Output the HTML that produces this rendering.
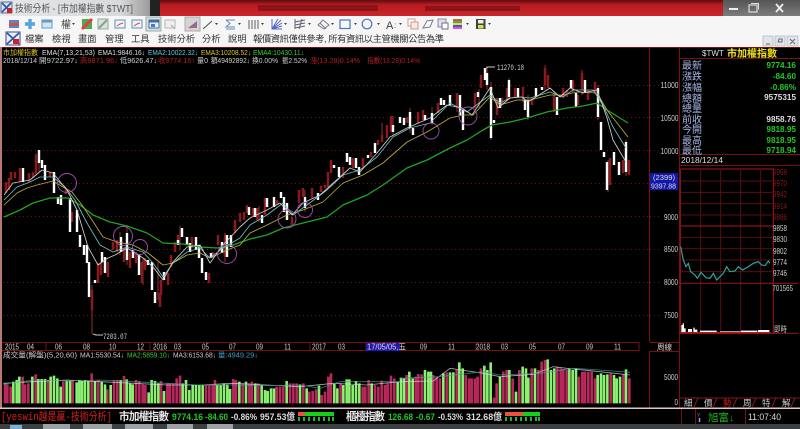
<!DOCTYPE html>
<html><head><meta charset="utf-8"><style>
html,body{margin:0;padding:0;background:#000;width:800px;height:429px;overflow:hidden}
svg{display:block;filter:blur(.35px)}
text{font-family:"Liberation Sans","Noto Sans CJK TC",sans-serif}
.m{font-family:"Liberation Mono","Noto Sans CJK TC",monospace}
</style></head><body>
<svg width="800" height="429" viewBox="0 0 800 429" xmlns="http://www.w3.org/2000/svg">
<defs><linearGradient id="tb" x1="0" y1="0" x2="0" y2="1"><stop offset="0" stop-color="#5c0c0e"/><stop offset=".3" stop-color="#b81c22"/><stop offset="1" stop-color="#c8262c"/></linearGradient>
<linearGradient id="tl" x1="0" y1="0" x2="1" y2="0"><stop offset="0" stop-color="#e4e8ea"/><stop offset=".8" stop-color="#d8dadc"/><stop offset="1" stop-color="#9a9a9a"/></linearGradient>
<linearGradient id="tw" x1="0" y1="0" x2="0" y2="1"><stop offset="0" stop-color="#555"/><stop offset="1" stop-color="#7c7c7c"/></linearGradient></defs>
<rect width="800" height="429" fill="#000"/>
<!-- title bar -->
<rect x="0" y="0" width="150" height="16" fill="url(#tl)"/>
<rect x="150" y="0" width="10" height="16" fill="#222"/>
<rect x="160" y="0" width="563" height="16" fill="url(#tb)"/>
<rect x="723" y="0" width="77" height="16" fill="url(#tw)"/>
<rect x="1" y="2" width="11" height="11" fill="#dde" stroke="#225" stroke-width=".6"/>
<path d="M2 3l9 9M11 3l-9 9" stroke="#1c5fb0" stroke-width="1.6"/>
<rect x="7" y="8" width="5" height="5" fill="#c22"/>
<text x="15" y="12" font-size="10.2" fill="#555" textLength="118" lengthAdjust="spacingAndGlyphs">技術分析 - [市加權指數 $TWT]</text>
<g fill="#7a1013" opacity=".7"><rect x="258" y="5" width="120" height="6"/><rect x="425" y="6" width="95" height="5"/></g>
<path d="M729 9h9" stroke="#eee" stroke-width="2"/>
<rect x="749" y="5" width="8" height="7" fill="none" stroke="#ddd" stroke-width="1.2"/><path d="M751 3.500h7.500v6" fill="none" stroke="#ddd"/>
<path d="M776 4l7 8M783 4l-7 8" stroke="#eee" stroke-width="1.8"/>
<!-- toolbar -->
<rect x="0" y="16" width="800" height="31" fill="#f6f6f6"/>
<rect x="146" y="17" width="15" height="14" fill="#d8e0e6" stroke="#9aa" />
<rect x="185" y="17" width="15" height="14" fill="#d4d4d4" stroke="#aaa"/>
<g opacity=".85">
<rect x="9" y="20" width="10" height="3" fill="#3a78b8"/><rect x="9" y="23" width="10" height="3" fill="#c33"/><rect x="9" y="26" width="10" height="2" fill="#3a78b8"/>
<path d="M30 19v10M25 24h10" stroke="#3c96d8" stroke-width="3.400"/>
<rect x="42" y="20" width="10" height="8" fill="#cfe3f2" stroke="#4a8cc0"/><rect x="42" y="20" width="10" height="2.500" fill="#4a8cc0"/>
<text x="61" y="28" font-size="10" fill="#222">權</text><path d="M72 23h3l-1.500 2z" fill="#222"/>
<rect x="82" y="19" width="10" height="10" fill="#30a030"/><path d="M82 29l10-10" stroke="#d22" stroke-width="3"/>
<rect x="98" y="19" width="10" height="10" fill="#d8e0d8" stroke="#8a9a8a"/><path d="M99 28l8-8" stroke="#6a9a7a" stroke-width="2"/>
<rect x="115" y="20" width="10" height="8" fill="#eef4fa" stroke="#4a80b0"/><path d="M117 26l3-2 3-1" stroke="#c33"/>
<rect x="132" y="20" width="10" height="8" fill="#eef4fa" stroke="#4a80b0"/><path d="M134 26l3-2 3-1" stroke="#c33"/>
<rect x="149" y="20" width="10" height="8" fill="#eef" stroke="#2a5a90"/><rect x="149" y="20" width="10" height="2.500" fill="#2a5a90"/><rect x="151" y="24" width="4" height="3" fill="#36c"/>
<rect x="165" y="20" width="10" height="8" fill="#eee" stroke="#aaa"/><path d="M171 25l4 4" stroke="#999"/>
<path d="M188 28l9-7v7z" fill="#7060b0"/><path d="M190 28l6-4" stroke="#c44" stroke-width="1.500"/>
<path d="M203 29l9-8" stroke="#333"/><path d="M215 23h3l-1.500 2z" fill="#222"/>
<path d="M226 20h9M226 20l4 3.500-4 3.500h9M226 29h9" fill="none" stroke="#4a78b0"/><path d="M238 23h3l-1.500 2z" fill="#222"/>
<path d="M249 20v9M252 20v9M255 20v9M258 20v9" stroke="#444"/><path d="M261 23h3l-1.500 2z" fill="#222"/>
<path d="M272 19v10h10M272 29l9-9M272 29l10-6M272 29l10-3M272 29l6-10" stroke="#3a50b8" fill="none"/><path d="M284 23h3l-1.500 2z" fill="#222"/>
<path d="M295 19v10M295 22l10-2M295 25l10-2M295 28l10-2M302 19l-3 10" stroke="#445" fill="none"/><path d="M308 23h3l-1.500 2z" fill="#222"/>
<path d="M318 25l5-5 6 5-5 4zM320 23l6 6" fill="none" stroke="#667"/><path d="M331 23h3l-1.500 2z" fill="#222"/>
<rect x="340" y="20" width="10" height="8.500" fill="none" stroke="#3060b0" stroke-width="1.200"/><path d="M354 23h3l-1.500 2z" fill="#222"/>
<circle cx="367" cy="24" r="4.800" fill="none" stroke="#3060b0" stroke-width="1.200"/><path d="M377 23h3l-1.500 2z" fill="#222"/>
<text x="386" y="29" font-size="11" fill="#222" font-family="Liberation Serif">A</text><text x="394" y="28" font-size="8" fill="#333">:</text><path d="M399 23h3l-1.500 2z" fill="#222"/>
<rect x="408" y="19" width="7" height="7" fill="#fff" stroke="#c88"/><rect x="411" y="22" width="7" height="7" fill="#fde8d8" stroke="#c88"/>
<path d="M423 28l4-7 6-1-3 7z" fill="#fff" stroke="#667"/>
<rect x="438" y="19" width="8" height="8" fill="#dde" stroke="#778"/><rect x="442" y="23" width="6" height="6" fill="#fff" stroke="#557"/>
<g><rect x="453" y="19" width="9" height="2" fill="#d33"/><rect x="453" y="21" width="9" height="2" fill="#2a2"/><rect x="453" y="23" width="9" height="2" fill="#dd2"/><rect x="453" y="25" width="9" height="2" fill="#33c"/><rect x="453" y="27" width="9" height="2" fill="#d3d"/></g><path d="M466 23h3l-1.500 2z" fill="#222"/>
<rect x="476" y="19" width="9.500" height="10" fill="#222"/><rect x="478" y="20" width="5.500" height="3.500" fill="#eee"/><rect x="478" y="25" width="5.500" height="3.500" fill="#dd2"/><path d="M488 23h3l-1.500 2z" fill="#222"/>
</g>
<!-- menu row -->
<rect x="6" y="32" width="14" height="13" fill="#eef" stroke="#448"/><path d="M7 33l12 11M19 33l-12 11" stroke="#1c5fb0" stroke-width="1.800"/><rect x="13" y="39" width="6" height="5" fill="#c22"/>
<g font-size="9.300" fill="#333">
<text x="25" y="42">檔案</text><text x="52" y="42">檢視</text><text x="78" y="42">畫面</text><text x="105" y="42">管理</text><text x="131" y="42">工具</text><text x="158" y="42">技術分析</text><text x="202" y="42">分析</text><text x="228" y="42">說明</text>
<text x="253" y="42" textLength="191">報價資訊僅供參考, 所有資訊以主管機關公告為準</text></g>
<g fill="#dfe6ea" stroke="#b4bcc4" stroke-width=".8"><rect x="763" y="36" width="10" height="10"/><rect x="775" y="36" width="10" height="10"/><rect x="787" y="36" width="11" height="10"/></g>
<path d="M766 44h4M778 42h4v-3h-3zM790 39l5 5M795 39l-5 5" stroke="#667" fill="none"/>
<!-- frame -->
<g stroke="#7a1014" fill="none"><path d="M2 47.500H800M649.500 47V342M679.500 47V408M649.500 351V408M2 342.500H639M2 350.500H639M650 342.500H679M650 351.500H679M680 58.500H800M680 154.500H800M680 165.500H800"/></g>
<rect x="0" y="47" width="2" height="362" fill="#b87878"/>
<rect x="0" y="407.500" width="800" height="1.500" fill="#e0c8c8"/>
<!-- grid -->
<g stroke="#6a1418" stroke-dasharray="1 3" fill="none"><path d="M3 85.500H649M3 117.500H649M3 150.500H649M3 183.500H649M3 216.500H649M3 249.500H649M3 282.500H649M3 315.500H649M650 85.500H660M650 117.500H660M650 150.500H660M650 216.500H660M650 249.500H660M650 282.500H660M650 315.500H660"/></g>
<!-- wicks -->
<path d="M92 285V334M39 150V172M36 153V175M127 225V265M120 232V255M158 262V300M143 258V285M180 226V250M225 233V262M305 190V212M259 206V222M410 108V133M457 93V112M463 108V130M479 89V108M491 82V140M487 66V90M509 78V100M545 65V90M554 92V112M528 95V120M582 70V95M598 85V120M608 160V192M626 140V176M382 123V140M393 116V135M432 107V125" stroke="#a33" stroke-width=".9" fill="none"/>
<!-- red bodies -->
<path stroke="#8c1a1c" stroke-width="2.500" fill="none" d="M6 182V193M9 178V190M11 172V180M15 172V178M20 168V182M29 173V182M33 172V178M36 155V173M50 172V177M66 188V194M72 212V222M92 290V310M98 263V283M101 262V275M108 262V277M113 242V250M117 240V252M124 248V262M130 252V268M136 252V263M142 262V283M145 258V270M160 293V307M161 280V295M168 273V285M171 255V267M175 242V252M178 235V245M192 237V248M209 273V283M213 252V258M218 235V245M225 235V257M235 220V233M240 213V222M244 212V220M247 205V213M253 208V216M257 208V220M265 198V215M277 200V205M292 217V225M299 190V203M303 188V197M312 188V198M321 186V192M325 185V188M328 172V187M331 160V173M343 167V178M353 158V168M363 158V167M371 152V157M378 140V145M382 135V142M387 125V138M391 116V132M407 117V123M418 112V123M423 110V120M438 103V113M457 93V108M475 93V108M481 75V88M497 98V115M502 98V105M507 88V100M515 88V97M523 87V102M532 98V105M545 68V85M548 75V88M554 95V110M563 88V98M567 90V97M573 80V92M578 95V105M582 73V90M588 90V100M595 82V93M610 158V185M623 160V173M629 160V175"/>
<!-- white bodies -->
<path stroke="#fff" stroke-width="2.400" fill="none" d="M23 168V182M39 150V163M42 160V168M45 165V180M54 172V193M58 197V204M61 195V205M70 198V232M77 210V232M80 235V247M84 245V255M87 245V263M89 262V297M95 280V283M102 252V262M105 257V273M121 237V252M127 233V260M133 250V258M139 255V275M148 260V265M152 262V290M155 292V303M164 272V280M178 240V245M182 228V237M187 237V245M190 243V252M196 237V250M199 245V258M202 258V273M206 272V280M211 253V258M222 242V253M227 235V257M231 235V247M249 207V215M255 208V217M262 215V223M267 198V207M274 197V207M281 192V198M284 197V212M287 203V220M305 197V208M318 193V200M334 165V168M339 167V177M347 153V162M350 157V165M356 158V168M359 167V175M368 155V158M375 143V153M393 125V132M400 117V123M404 118V125M410 112V128M413 128V135M425 115V120M432 113V123M441 98V105M444 100V105M450 95V105M460 95V115M463 110V130M478 92V97M485 68V80M487 73V85M491 87V138M494 120V123M500 98V108M509 80V97M518 88V97M525 100V110M528 100V117M536 88V97M542 87V90M557 97V115M571 80V88M576 93V107M585 80V93M598 88V117M601 122V150M604 152V157M607 162V190M614 152V165M619 162V175M626 142V172"/>
<!-- EMA lines -->
<g fill="none" stroke-linejoin="round" stroke-width=".85">
<polyline stroke="#22a322" stroke-width="1.300" points="4,217 20,210 33,203 50,198 68,198 80,205 93,215 110,222 127,226 147,233 163,243 183,244 200,247 217,248 233,245 250,239 267,235 283,228 307,222 327,217 343,205 367,195 383,185 407,168 427,160 450,148 467,140 483,130 492,125 510,122 527,118 547,112 567,108 583,106 597,103 607,110 628,123"/>
<polyline stroke="#b8b038" points="4,205 17,193 27,188 37,185 53,181 63,187 72,192 82,205 92,220 103,237 117,242 133,245 148,253 163,265 173,263 187,255 200,253 210,258 227,250 240,245 250,233 263,227 287,215 303,210 323,202 343,183 363,175 383,163 407,142 427,132 450,118 463,115 473,115 490,97 500,105 517,100 530,100 550,95 563,95 577,92 597,93 607,110 617,123 628,137"/>
<polyline stroke="#6cc0c0" points="4,200 17,187 30,182 40,177 53,177 65,187 75,200 87,223 100,245 113,252 127,247 143,252 153,263 163,277 173,263 187,252 200,248 210,258 223,248 240,238 250,225 267,215 283,203 293,215 307,205 327,190 343,175 360,170 377,157 393,137 410,128 430,123 450,103 467,112 490,95 500,103 510,98 520,97 530,98 550,92 563,97 573,90 593,90 603,105 613,127 626,148"/>
<polyline stroke="#cfcfcf" points="4,195 13,183 30,180 42,170 53,173 67,190 77,210 88,247 98,265 108,258 115,255 127,248 143,258 153,267 163,280 173,262 187,247 200,245 210,263 223,245 240,227 250,218 267,210 280,203 292,215 303,203 320,195 340,177 350,168 360,172 377,153 390,137 407,128 430,118 447,105 462,108 472,115 490,88 498,108 510,98 522,97 528,102 550,88 560,97 570,88 583,93 597,90 607,118 613,140 623,157 626,162"/>
</g>
<!-- circles -->
<g fill="none" stroke="#a050b0" stroke-width=".9"><circle cx="67" cy="183" r="9.500"/><circle cx="123" cy="236" r="9.500"/><circle cx="140" cy="247" r="7.500"/><circle cx="227" cy="254" r="9.500"/><circle cx="287" cy="219" r="9"/><circle cx="305" cy="210" r="7.500"/><circle cx="431" cy="131" r="8"/><circle cx="468" cy="116" r="9"/></g>
<path d="M485 69l3-2h7M93 334l3 1h7" stroke="#ccc" fill="none"/>
<text x="497" y="70" font-size="8" fill="#ccc" class="m" textLength="27" lengthAdjust="spacingAndGlyphs">11270.18</text>
<text x="103" y="339" font-size="8" fill="#ccc" class="m" textLength="24" lengthAdjust="spacingAndGlyphs">7203.07</text>
<!-- info lines -->
<g font-size="7.200" class="m">
<text x="3" y="55" fill="#d8c020" textLength="35" lengthAdjust="spacingAndGlyphs">市加權指數</text><text x="42" y="55" fill="#ddd" textLength="53" lengthAdjust="spacingAndGlyphs">EMA(7,13,21,53)</text><text x="98" y="55" fill="#ddd" textLength="47" lengthAdjust="spacingAndGlyphs">EMA1:9846.16↓</text><text x="148" y="55" fill="#60c8d8" textLength="50" lengthAdjust="spacingAndGlyphs">EMA2:10022.32↓</text><text x="201" y="55" fill="#d8c830" textLength="50" lengthAdjust="spacingAndGlyphs">EMA3:10208.52↓</text><text x="253" y="55" fill="#30d030" textLength="51" lengthAdjust="spacingAndGlyphs">EMA4:10430.11↓</text>
<text x="3" y="63" fill="#ccc" textLength="34" lengthAdjust="spacingAndGlyphs">2018/12/14</text><text x="39" y="63" fill="#ccc" textLength="39" lengthAdjust="spacingAndGlyphs">開9722.97↓</text><text x="80" y="63" fill="#b02020" textLength="38" lengthAdjust="spacingAndGlyphs">高9871.96↓</text><text x="120" y="63" fill="#ccc" textLength="37" lengthAdjust="spacingAndGlyphs">低9626.47↓</text><text x="158" y="63" fill="#b02020" textLength="37" lengthAdjust="spacingAndGlyphs">收9774.16↑</text><text x="197" y="63" fill="#ccc" textLength="11" lengthAdjust="spacingAndGlyphs">量0</text><text x="211" y="63" fill="#ccc" textLength="39" lengthAdjust="spacingAndGlyphs">額49492892↓</text><text x="252" y="63" fill="#ccc" textLength="26" lengthAdjust="spacingAndGlyphs">換0.00%</text><text x="282" y="63" fill="#ccc" textLength="25" lengthAdjust="spacingAndGlyphs">振2.52%</text><text x="310" y="63" fill="#b02020" textLength="50" lengthAdjust="spacingAndGlyphs">漲(13.28)0.14%</text><text x="367" y="63" fill="#b02020" textLength="53" lengthAdjust="spacingAndGlyphs">指數(13.28)0.14%</text>
</g>
<!-- y axis -->
<g font-size="8.300" fill="#ccc"><text x="660.500" y="88" textLength="18" lengthAdjust="spacingAndGlyphs">11000</text><text x="660.500" y="121" textLength="18" lengthAdjust="spacingAndGlyphs">10500</text><text x="660.500" y="154" textLength="18" lengthAdjust="spacingAndGlyphs">10000</text><text x="664" y="220" textLength="14" lengthAdjust="spacingAndGlyphs">9000</text><text x="664" y="252" textLength="14" lengthAdjust="spacingAndGlyphs">8500</text><text x="664" y="285" textLength="14" lengthAdjust="spacingAndGlyphs">8000</text><text x="664" y="318" textLength="14" lengthAdjust="spacingAndGlyphs">7500</text><text x="664" y="380" textLength="14" lengthAdjust="spacingAndGlyphs">5000</text><text x="674.500" y="405" textLength="3.500" lengthAdjust="spacingAndGlyphs">0</text></g>
<rect x="650" y="173" width="28" height="17" fill="#1418a8"/>
<text x="653" y="180" font-size="7.500" fill="#ddd" textLength="22" lengthAdjust="spacingAndGlyphs">(2399)</text><text x="651" y="188.500" font-size="7.500" fill="#ddd" textLength="25" lengthAdjust="spacingAndGlyphs">9397.88</text>
<!-- quote panel -->
<text x="702" y="56" font-size="8" fill="#ddd">$TWT</text><text x="727" y="57" font-size="10" fill="#f0e020" font-weight="bold">市加權指數</text>
<g font-size="10" fill="#a8b8e8"><text x="682" y="69">最新</text><text x="682" y="80">漲跌</text><text x="682" y="91">漲幅</text><text x="682" y="102">總額</text><text x="682" y="112">總量</text><text x="682" y="123">前收</text><text x="682" y="133">今開</text><text x="682" y="144">最高</text><text x="682" y="154">最低</text></g>
<g font-size="8.200" text-anchor="end" font-weight="bold"><text x="796" y="68" fill="#22c822">9774.16</text><text x="796" y="79" fill="#22c822">-84.60</text><text x="796" y="90" fill="#22c822">-0.86%</text><text x="796" y="100" fill="#ddd">9575315</text><text x="796" y="122" fill="#ddd">9858.76</text><text x="796" y="132" fill="#22c822">9818.95</text><text x="796" y="143" fill="#22c822">9818.95</text><text x="796" y="153" fill="#22c822">9718.94</text></g>
<text x="681" y="163" font-size="8.200" fill="#ddd" textLength="42" lengthAdjust="spacingAndGlyphs">2018/12/14</text>
<!-- mini chart -->
<g transform="translate(620,165) scale(.33333)">
<g stroke="#5a0e12" stroke-width="3" fill="none"><path d="M242 15V505M302 15V505M362 15V505M422 15V505M180 48H456M180 82H456M180 116H456M180 150H456M180 217H456M180 251H456M180 285H456M180 320H456"/></g>
<g stroke="#8a1418" stroke-width="3.500" fill="none"><path d="M181 12H460V505M181 183H460M181 355H535M181 505H535M181 12V505"/></g>
<polyline fill="none" stroke="#2aa8a0" stroke-width="3.500" points="182,245 190,285 198,305 205,295 212,320 225,330 232,340 243,322 258,338 270,340 280,325 290,345 300,335 310,325 320,305 330,320 345,318 355,305 368,315 385,305 400,295 415,290 425,300 435,302 445,288 450,295"/>
<path fill="#fff" d="M184 503V480h4v-5h4v15h5v13zM204 503V492h12v11zM220 503V488h4v6h8v9zM240 503V497h50v6zM300 503V499h60v4zM362 503V497h50v6zM414 503V495h34v8z"/>
<path d="M182 503H452" stroke="#c01818" stroke-width="4"/>
</g>
<g font-size="8.300" fill="#8a1818"><text x="773" y="175" textLength="14" lengthAdjust="spacingAndGlyphs">9998</text><text x="773" y="186" textLength="14" lengthAdjust="spacingAndGlyphs">9970</text><text x="773" y="197" textLength="14" lengthAdjust="spacingAndGlyphs">9942</text><text x="773" y="209" textLength="14" lengthAdjust="spacingAndGlyphs">9914</text><text x="773" y="220" textLength="14" lengthAdjust="spacingAndGlyphs">9886</text></g>
<g font-size="8.300" fill="#ccc"><text x="773" y="231" textLength="14" lengthAdjust="spacingAndGlyphs">9858</text><text x="773" y="242" textLength="14" lengthAdjust="spacingAndGlyphs">9830</text><text x="773" y="254" textLength="14" lengthAdjust="spacingAndGlyphs">9802</text><text x="773" y="265" textLength="14" lengthAdjust="spacingAndGlyphs">9774</text><text x="773" y="276" textLength="14" lengthAdjust="spacingAndGlyphs">9746</text><text x="772.500" y="291" textLength="20.500" lengthAdjust="spacingAndGlyphs">701565</text><text x="774" y="332" font-size="8" textLength="13" lengthAdjust="spacingAndGlyphs">即時</text></g>
<!-- time axis -->
<path d="M46 342V351M150 342V351M310 342V351M476 342V351M639 342V351M366 342V351" stroke="#7a1014"/>
<rect x="366" y="343" width="34" height="8" fill="#2018b0"/>
<g font-size="7.800" fill="#ccc" lengthAdjust="spacingAndGlyphs"><text x="5" y="349.500" textLength="14" lengthAdjust="spacingAndGlyphs">2015</text><text x="27" y="349.500" textLength="7" lengthAdjust="spacingAndGlyphs">04</text><text x="55" y="349.500" textLength="7" lengthAdjust="spacingAndGlyphs">06</text><text x="83" y="349.500" textLength="7" lengthAdjust="spacingAndGlyphs">08</text><text x="109" y="349.500" textLength="7" lengthAdjust="spacingAndGlyphs">10</text><text x="137" y="349.500" textLength="7" lengthAdjust="spacingAndGlyphs">12</text><text x="153" y="349.500" textLength="14" lengthAdjust="spacingAndGlyphs">2016</text><text x="174" y="349.500" textLength="7" lengthAdjust="spacingAndGlyphs">03</text><text x="202" y="349.500" textLength="7" lengthAdjust="spacingAndGlyphs">05</text><text x="229" y="349.500" textLength="7" lengthAdjust="spacingAndGlyphs">07</text><text x="256" y="349.500" textLength="7" lengthAdjust="spacingAndGlyphs">09</text><text x="284" y="349.500" textLength="7" lengthAdjust="spacingAndGlyphs">11</text><text x="312" y="349.500" textLength="14" lengthAdjust="spacingAndGlyphs">2017</text><text x="338" y="349.500" textLength="7" lengthAdjust="spacingAndGlyphs">03</text><text x="367" y="349.500" fill="#ddd" textLength="39" lengthAdjust="spacingAndGlyphs">17/05/05,五</text><text x="420" y="349.500" textLength="7" lengthAdjust="spacingAndGlyphs">09</text><text x="448" y="349.500" textLength="7" lengthAdjust="spacingAndGlyphs">11</text><text x="476" y="349.500" textLength="14" lengthAdjust="spacingAndGlyphs">2018</text><text x="501" y="349.500" textLength="7" lengthAdjust="spacingAndGlyphs">03</text><text x="529" y="349.500" textLength="7" lengthAdjust="spacingAndGlyphs">05</text><text x="558" y="349.500" textLength="7" lengthAdjust="spacingAndGlyphs">07</text><text x="586" y="349.500" textLength="7" lengthAdjust="spacingAndGlyphs">09</text><text x="614" y="349.500" textLength="7" lengthAdjust="spacingAndGlyphs">11</text><text x="657" y="350" font-size="8" textLength="15" lengthAdjust="spacingAndGlyphs">周線</text></g>
<g font-size="7.200" class="m"><text x="3" y="357.500" fill="#ccc" textLength="74" lengthAdjust="spacingAndGlyphs">成交量(解盤)(5,20,60)</text><text x="80" y="357.500" fill="#ccc" textLength="44" lengthAdjust="spacingAndGlyphs">MA1:5530.54↓</text><text x="127" y="357.500" fill="#30d030" textLength="43" lengthAdjust="spacingAndGlyphs">MA2:5859.10↓</text><text x="173" y="357.500" fill="#ccc" textLength="43" lengthAdjust="spacingAndGlyphs">MA3:6153.68↓</text><text x="218" y="357.500" fill="#30a0c8" textLength="40" lengthAdjust="spacingAndGlyphs">量:4949.29↓</text></g>
<!-- volume left half -->
<g transform="translate(0,335) scale(.33333)" fill="none" stroke-width="7.800">
<path stroke="#b8285c" d="M15 205V145M22 205V148M32 205V155M68 205V125M75 205V148M85 205V145M107 205V118M145 205V135M190 205V140M218 205V135M275 205V115M295 205V135M322 205V163M342 205V135M352 205V135M372 205V123M408 205V135M418 205V138M428 205V148M436 205V150M483 205V138M502 205V145M510 205V145M520 205V145M530 205V130M540 205V122M618 205V150M628 205V150M638 205V150M645 205V135M700 205V132M708 205V135M728 205V145M748 205V145M756 205V140M775 205V145M830 205V155M840 205V155M850 205V155M870 205V145M880 205V145M890 205V145M910 205V145M928 205V170M938 205V168M948 205V163M965 205V180M975 205V170M985 205V125M993 205V115M1022 205V145M1088 205V155M1096 205V155M1106 205V135M1125 205V150M1135 205V155M1145 205V137M1155 205V150M1163 205V145M1173 205V122M1183 205V130"/>
<path stroke="#8cf070" d="M40 205V140M50 205V135M58 205V125M97 205V125M115 205V132M125 205V132M135 205V132M152 205V125M162 205V122M172 205V130M182 205V155M200 205V138M210 205V138M230 205V142M238 205V135M246 205V138M255 205V135M265 205V138M285 205V138M305 205V140M315 205V148M332 205V150M362 205V135M380 205V133M390 205V145M398 205V148M446 205V172M455 205V135M465 205V138M475 205V145M492 205V168M548 205V145M558 205V135M568 205V165M578 205V150M588 205V150M598 205V150M608 205V150M652 205V150M662 205V150M672 205V145M682 205V148M690 205V162M718 205V140M738 205V140M766 205V145M785 205V150M795 205V165M803 205V168M813 205V160M822 205V160M860 205V138M900 205V148M920 205V160M957 205V152M1003 205V145M1012 205V160M1030 205V150M1040 205V133M1048 205V133M1058 205V150M1068 205V138M1078 205V145M1115 205V145M1193 205V140"/>
</g>
<g transform="translate(400,335) scale(.33333)" fill="none" stroke-width="7.800">
<path stroke="#b8285c" d="M20 205V120M47 205V125M55 205V117M65 205V118M100 205V120M110 205V125M120 205V130M140 205V112M170 205V105M197 205V120M207 205V130M215 205V130M225 205V130M233 205V125M243 205V100M282 205V188M290 205V145M310 205V110M320 205V105M338 205V130M358 205V105M395 205V100M415 205V105M425 205V80M435 205V75M472 205V95M482 205V100M490 205V102M500 205V105M537 205V125M547 205V110M555 205V110M565 205V110M575 205V110M585 205V130M632 205V115M670 205V118M688 205V130"/>
<path stroke="#8cf070" d="M3 205V128M12 205V130M28 205V110M38 205V130M75 205V105M85 205V110M93 205V110M130 205V115M150 205V112M160 205V112M178 205V82M188 205V100M253 205V92M262 205V105M272 205V82M300 205V125M328 205V105M348 205V170M368 205V95M378 205V100M385 205V128M405 205V100M443 205V73M453 205V105M463 205V100M508 205V100M518 205V105M528 205V100M593 205V120M603 205V115M612 205V120M622 205V118M642 205V120M650 205V130M660 205V125M678 205V103"/>
</g>
<!-- volume MA lines -->
<g transform="translate(0,335) scale(.33333)" fill="none" stroke-width="2.500" opacity=".75">
<polyline stroke="#ddd" points="10,145 100,140 200,135 300,140 400,145 500,150 600,150 700,145 800,150 900,155 1000,145 1100,150 1200,140"/>
<polyline stroke="#3aa8a0" points="10,148 100,135 200,138 300,135 400,140 500,145 600,150 700,150 800,152 900,150 960,160 1020,140 1200,140"/>
</g>
<g transform="translate(400,335) scale(.33333)" fill="none" stroke-width="2.500" opacity=".75">
<polyline stroke="#ddd" points="0,140 100,138 150,100 250,115 300,125 400,118 460,95 500,100 600,110 690,120"/>
<polyline stroke="#3aa8a0" points="0,130 120,125 250,110 300,120 420,115 520,100 600,105 690,112"/>
</g>
<!-- tabs -->
<path d="M680 398H800M698 398l-4 9M717 398l-4 9M737 398l-4 9M756 398l-4 9M776 398l-4 9M795 398l-4 9" stroke="#8a1418" fill="none"/>
<g font-size="8.500" fill="#ccc"><text x="684" y="406">細</text><text x="704" y="406">價</text><text x="723" y="406" fill="#d02020">勢</text><text x="743" y="406">周</text><text x="762" y="406">特</text><text x="782" y="406">解</text></g>
<!-- ticker -->
<text x="1" y="420" font-size="10.600" fill="#d82020" class="m" textLength="111" lengthAdjust="spacingAndGlyphs">[yeswin越是贏-技術分析]</text>
<text x="119" y="420" font-size="10.600" fill="#e8e8e8" font-weight="bold" textLength="50">市加權指數</text>
<g font-size="9.500" font-weight="bold"><text x="172" y="420" fill="#22c822" textLength="31" lengthAdjust="spacingAndGlyphs">9774.16</text><text x="205" y="420" fill="#22c822" textLength="23" lengthAdjust="spacingAndGlyphs">-84.60</text><text x="231" y="420" fill="#ddd" textLength="26" lengthAdjust="spacingAndGlyphs">-0.86%</text><text x="260" y="420" fill="#ddd" textLength="35" lengthAdjust="spacingAndGlyphs">957.53億</text></g>
<rect x="298" y="412" width="7" height="4" fill="#f05040"/><rect x="305" y="412" width="29" height="4" fill="#18d018"/>
<path d="M299 417v4M304 417v4M309 417v4M314 417v4M319 417v4M324 417v4M329 417v4M333 417v4" stroke="#18c018" stroke-width="2"/>
<text x="346" y="420" font-size="10.600" fill="#e8e8e8" font-weight="bold" textLength="39">櫃檯指數</text>
<g font-size="9.500" font-weight="bold"><text x="388" y="420" fill="#22c822" textLength="25" lengthAdjust="spacingAndGlyphs">126.68</text><text x="416" y="420" fill="#22c822" textLength="19" lengthAdjust="spacingAndGlyphs">-0.67</text><text x="438" y="420" fill="#ddd" textLength="25" lengthAdjust="spacingAndGlyphs">-0.53%</text><text x="466" y="420" fill="#ddd" textLength="36" lengthAdjust="spacingAndGlyphs">312.68億</text></g>
<rect x="505" y="412" width="18" height="4" fill="#f05040"/><rect x="523" y="412" width="17" height="4" fill="#18d018"/>
<path d="M506 417v4M511 417v4M516 417v4M521 417v4M526 417v4M531 417v4M536 417v4M539 417v4" stroke="#18c018" stroke-width="2"/>
<path d="M681.500 409V424M695.500 409V424M745.500 409V424" stroke="#7a1014"/>
<text x="697" y="417" font-size="5" fill="#6868e0">Y</text><path d="M699.500 418v4" stroke="#a0a0f0" stroke-width="1.500"/>
<text x="708" y="421" font-size="10.500" fill="#22b822">旭富</text><text x="729" y="421" font-size="10" fill="#22b822">↓</text>
<text x="748" y="420" font-size="9.300" fill="#ddd" textLength="33" lengthAdjust="spacingAndGlyphs">11:07:40</text>
<!-- taskbar -->
<rect x="0" y="424" width="800" height="5" fill="#3c4043"/>
<rect x="10" y="425" width="12" height="4" fill="#7ab0d8"/>
<g fill="#9aa0a4"><rect x="43" y="424" width="27" height="5"/><rect x="83" y="424" width="29" height="5"/><rect x="125" y="424" width="28" height="5"/><rect x="167" y="424" width="26" height="5"/><rect x="207" y="424" width="26" height="5"/></g>
</svg>
</body></html>
